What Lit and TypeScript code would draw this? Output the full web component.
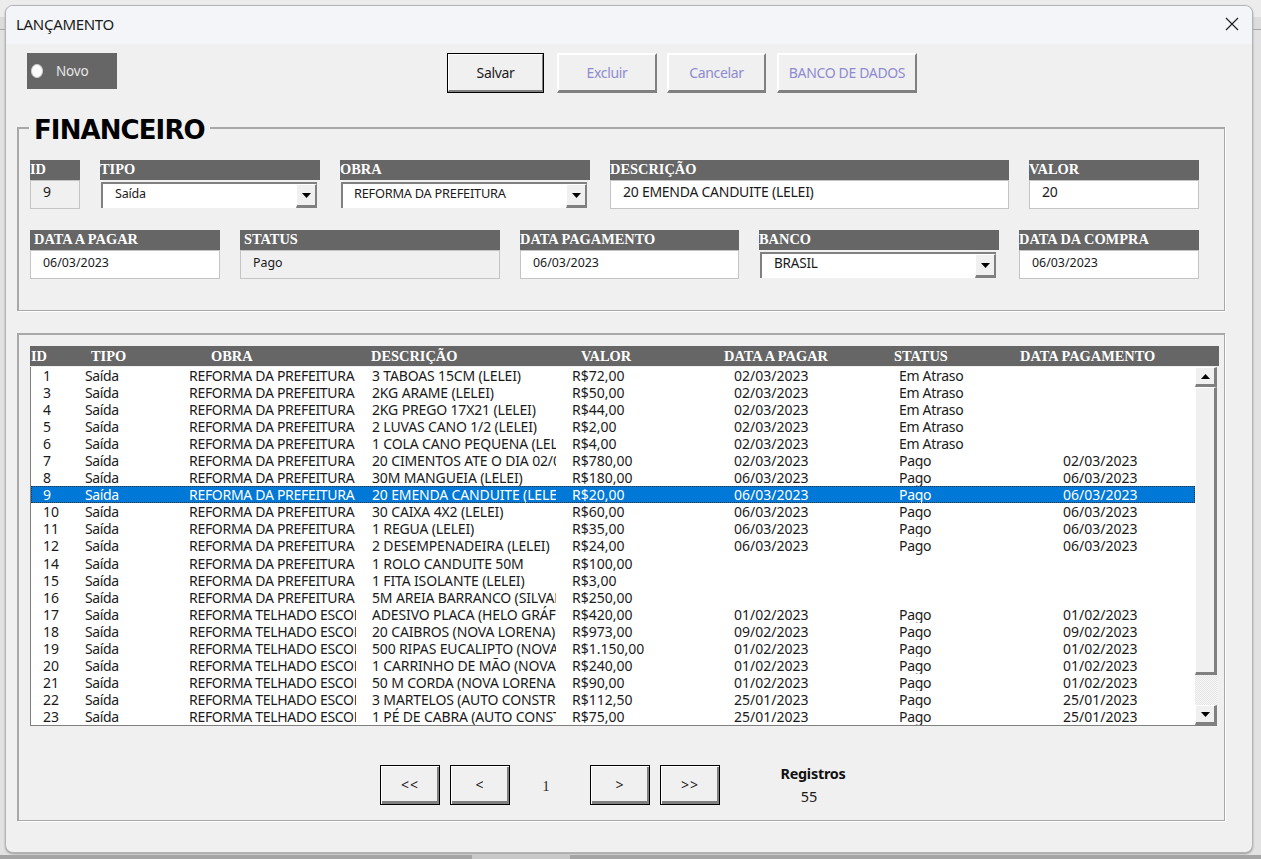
import { LitElement, html, css } from "lit";
import { customElement } from "lit/decorators.js";

const REF = "REFORMA DA PREFEITURA";
const TEL = "REFORMA TELHADO ESCOLA";
type Row = [string, string, string, string, string, string, string];
const rows: Row[] = [
  ["1", REF, "3 TABOAS 15CM (LELEI)", "R$72,00", "02/03/2023", "Em Atraso", ""],
  ["3", REF, "2KG ARAME (LELEI)", "R$50,00", "02/03/2023", "Em Atraso", ""],
  ["4", REF, "2KG PREGO 17X21 (LELEI)", "R$44,00", "02/03/2023", "Em Atraso", ""],
  ["5", REF, "2 LUVAS CANO 1/2 (LELEI)", "R$2,00", "02/03/2023", "Em Atraso", ""],
  ["6", REF, "1 COLA CANO PEQUENA (LELEI)", "R$4,00", "02/03/2023", "Em Atraso", ""],
  ["7", REF, "20 CIMENTOS ATE O DIA 02/03", "R$780,00", "02/03/2023", "Pago", "02/03/2023"],
  ["8", REF, "30M MANGUEIA (LELEI)", "R$180,00", "06/03/2023", "Pago", "06/03/2023"],
  ["9", REF, "20 EMENDA CANDUITE (LELEI)", "R$20,00", "06/03/2023", "Pago", "06/03/2023"],
  ["10", REF, "30 CAIXA 4X2 (LELEI)", "R$60,00", "06/03/2023", "Pago", "06/03/2023"],
  ["11", REF, "1 REGUA (LELEI)", "R$35,00", "06/03/2023", "Pago", "06/03/2023"],
  ["12", REF, "2 DESEMPENADEIRA (LELEI)", "R$24,00", "06/03/2023", "Pago", "06/03/2023"],
  ["14", REF, "1 ROLO CANDUITE 50M", "R$100,00", "", "", ""],
  ["15", REF, "1 FITA ISOLANTE (LELEI)", "R$3,00", "", "", ""],
  ["16", REF, "5M AREIA BARRANCO (SILVANO)", "R$250,00", "", "", ""],
  ["17", TEL, "ADESIVO PLACA (HELO GRÁFICA)", "R$420,00", "01/02/2023", "Pago", "01/02/2023"],
  ["18", TEL, "20 CAIBROS (NOVA LORENA)", "R$973,00", "09/02/2023", "Pago", "09/02/2023"],
  ["19", TEL, "500 RIPAS EUCALIPTO (NOVA LORENA)", "R$1.150,00", "01/02/2023", "Pago", "01/02/2023"],
  ["20", TEL, "1 CARRINHO DE MÃO (NOVA LORENA)", "R$240,00", "01/02/2023", "Pago", "01/02/2023"],
  ["21", TEL, "50 M CORDA (NOVA LORENA)", "R$90,00", "01/02/2023", "Pago", "01/02/2023"],
  ["22", TEL, "3 MARTELOS (AUTO CONSTRUÇÃO)", "R$112,50", "25/01/2023", "Pago", "25/01/2023"],
  ["23", TEL, "1 PÉ DE CABRA (AUTO CONSTRUÇÃO)", "R$75,00", "25/01/2023", "Pago", "25/01/2023"],
];

const arrowDown = html`<svg class="arr" width="9" height="5" viewBox="0 0 9 5"><path d="M0 0h9L4.5 5z" fill="#000"/></svg>`;
const arrowUp = html`<svg class="arr" width="9" height="5" viewBox="0 0 9 5"><path d="M0 5h9L4.5 0z" fill="#000"/></svg>`;

@customElement("app-root")
export class AppRoot extends LitElement {
  static styles = css`
    :host { display: block; width: 1261px; height: 859px; overflow: hidden; background: linear-gradient(180deg, #ececec 0 17px, #dcdcdc 17px 29px, #a8a8a8 29px 30px, #e2e2e2 30px); font-family: "Noto Sans", "Liberation Sans", sans-serif; font-size: 14px; color: #1a1a1a; }
    * { box-sizing: border-box; }
    .dialog { margin: 5px 8px 0 5px; width: 1248px; height: 848px; background: #f0f0f0; border: 1px solid #b4b4b4; border-radius: 8px; overflow: hidden; box-shadow: 0 1px 2px #999; }
    .title { height: 38px; background: #f3f5f9; display: flex; align-items: center; justify-content: space-between; padding: 0 13px 2px 10px; font-size: 15px; letter-spacing: -0.3px; }
    .title svg { display: block; }
    .body { padding: 9px 27px 0 11px; }
    .top { display: flex; height: 40px; margin-bottom: 34px; }
    .novo { margin-left: 10px; width: 90px; height: 36px; background: #666; display: flex; align-items: center; padding-left: 4px; gap: 13px; color: #e6e6e6; font-size: 13.5px; letter-spacing: -0.2px; }
    .radio { width: 12px; height: 14px; border-radius: 50%; background: #fff; border: 1px solid #d0d0d0; }
    .actions { display: flex; margin-left: 330px; gap: 11px; }
    .btn { height: 40px; background: #f0f0f0; display: flex; align-items: center; justify-content: center; border-top: 2px solid #fff; border-left: 2px solid #fff; border-right: 2px solid #808080; border-bottom: 3px solid #808080; font-size: 14px; letter-spacing: -0.34px; color: #1a1a1a; white-space: nowrap; }
    .btn.dis { color: #8d8bd0; }
    .btn.def { outline: 1px solid #000; outline-offset: -1px; }
    .btn.w97 { width: 97px; }
    .btn.w100 { width: 100px; margin-left: 2px; }
    .btn.w99 { width: 99px; margin-left: -1px; }
    .btn.w140 { width: 140px; }
    .group { border: 2px solid #a8a8a8; border-right-width: 1px; border-bottom-width: 1px; box-shadow: 1px 1px 0 #fff; width: 1208px; }
    .fin { height: 184px; padding: 11px 0 0 11px; display: flex; flex-direction: column; gap: 20px; }
    .legend-line { height: 0; position: relative; }
    .legend { position: absolute; left: -1px; top: -25px; background: #f0f0f0; padding: 0 5px; height: 30px; font: 700 26px/30px "DejaVu Sans", sans-serif; color: #000; letter-spacing: -0.9px; white-space: nowrap; }
    .fr { display: flex; gap: 20px; }
    .fr.second { margin-top: 1px; }
    .f { display: flex; flex-direction: column; }
    .lab { height: 20px; background: #666; color: #fff; font: 700 14.4px/19px "Liberation Serif", serif; white-space: nowrap; }
    .lab.pad { padding-left: 4px; }
    .val { height: 29px; background: #fff; border: 1px solid #c4c4c4; padding: 1px 0 0 12px; font-size: 14px; letter-spacing: -0.26px; white-space: nowrap; }
    .val.ro { background: #f0f0f0; }
    .val.s { font-size: 12.4px; letter-spacing: 0; padding-top: 3px; }
    .combo { height: 26px; margin: 2px 3px 0 1px; background: #fff; border-top: 2px solid #808080; border-left: 2px solid #808080; display: flex; justify-content: space-between; padding-left: 12px; font-size: 12.5px; letter-spacing: -0.2px; line-height: 19px; white-space: nowrap; }
    .combo .wide { font-size: 12.8px; letter-spacing: -0.25px; margin-left: -1px; }
    .combo .big { font-size: 13.5px; line-height: 19px; }
    .dd { width: 21px; height: 24px; background: #f0f0f0; border-top: 1px solid #fff; border-left: 1px solid #fff; border-right: 2px solid #808080; border-bottom: 3px solid #808080; display: flex; align-items: center; justify-content: center; flex: none; }
    .arr { display: block; }
    .list { margin-top: 22px; height: 488px; padding: 11px 0 0 11px; }
    .thead { width: 1189px; height: 20px; padding-left: 1px; background: #666; color: #fff; font: 700 14.4px/21px "Liberation Serif", serif; display: grid; grid-template-columns: 60px 120px 160px 210px 143px 170px 126px 199px; white-space: nowrap; }
    .tbody { width: 1187px; height: 359px; border: 1px solid #808080; border-top: 0; border-right: 0; display: flex; background: #fff; margin-top: 1px; }
    .rows { width: 1165px; overflow: hidden; }
    .row { height: 17.05px; line-height: 17px; display: grid; grid-template-columns: 54px 104px 167px 16px 184px 16px 162px 165px 164px 129px; white-space: nowrap; }
    .row span { overflow: hidden; }
    .row .id { padding-left: 12px; }
    .row .tp { letter-spacing: -0.4px; }
    .row .ob { letter-spacing: -0.3px; }
    .row .de { letter-spacing: -0.15px; }
    .row .st { letter-spacing: -0.3px; }
    .row.sel { background: #0078d7; color: #fff; outline: 1px dotted #333; outline-offset: -1px; }
    .sb { width: 22px; height: 358px; display: flex; flex-direction: column; background: repeating-conic-gradient(#f6f6f6 0 25%, #e6e6e6 0 50%) 0 0 / 2px 2px; }
    .sbtn { width: 22px; height: 20px; background: #f0f0f0; border-top: 1px solid #fff; border-left: 1px solid #fff; border-right: 3px solid #808080; border-bottom: 3px solid #808080; display: flex; align-items: center; justify-content: center; flex: none; }
    .thumb { height: 288px; width: 22px; background: #f0f0f0; border-top: 1px solid #fff; border-left: 1px solid #fff; border-right: 3px solid #808080; border-bottom: 3px solid #808080; flex: none; }
    .sp { flex: 1; }
    .pager { display: flex; margin: 39px 0 0 350px; align-items: flex-start; }
    .pbtn { width: 60px; height: 40px; border: 1px solid #000; background: #f0f0f0; box-shadow: inset 1px 1px 0 #fff, inset -2px -3px 0 #808080; display: flex; align-items: center; justify-content: center; font-size: 14px; letter-spacing: 1px; color: #222; padding-bottom: 1px; }
    .pbtn.next { margin-left: 10px; }
    .pnum { width: 80px; padding-right: 8px; text-align: center; font: 14px/44px "Liberation Serif", serif; color: #222; }
    .reg { margin-left: 60px; width: 66px; display: flex; flex-direction: column; align-items: center; }
    .reg b { font-size: 14.4px; letter-spacing: -0.25px; line-height: 18px; color: #111; white-space: nowrap; }
    .reg span { line-height: 18px; margin-top: 4px; margin-left: -8px; font-size: 14.5px; }
    .taskbar { height: 4px; margin-top: 2px; background: linear-gradient(90deg, #a4a4a4 0 472px, #c8c8c8 472px 570px, #a4a4a4 570px); }
  `;

  field(label: string, w: number, body: unknown, pad = false) {
    return html`<div class="f" style="width:${w}px"><div class="lab ${pad ? "pad" : ""}">${label}</div>${body}</div>`;
  }

  render() {
    return html`
      <div class="dialog">
        <div class="title"><span>LANÇAMENTO</span>
          <svg width="14" height="14" viewBox="0 0 14 14"><path d="M1 1l12 12M13 1L1 13" stroke="#222" stroke-width="1.2" fill="none"/></svg>
        </div>
        <div class="body">
          <div class="top">
            <div class="novo"><div class="radio"></div><span>Novo</span></div>
            <div class="actions">
              <div class="btn def w97">Salvar</div>
              <div class="btn dis w100">Excluir</div>
              <div class="btn dis w99">Cancelar</div>
              <div class="btn dis w140">BANCO DE DADOS</div>
            </div>
          </div>
          <div class="group fin">
            <div class="legend-line"><div class="legend">FINANCEIRO</div></div>
            <div class="fr">
              ${this.field("ID", 50, html`<div class="val ro">9</div>`)}
              ${this.field("TIPO", 220, html`<div class="combo"><span>Saída</span><div class="dd">${arrowDown}</div></div>`)}
              ${this.field("OBRA", 250, html`<div class="combo"><span class="wide">REFORMA DA PREFEITURA</span><div class="dd">${arrowDown}</div></div>`)}
              ${this.field("DESCRIÇÃO", 399, html`<div class="val">20 EMENDA CANDUITE (LELEI)</div>`)}
              ${this.field("VALOR", 170, html`<div class="val">20</div>`)}
            </div>
            <div class="fr second">
              ${this.field("DATA A PAGAR", 190, html`<div class="val s">06/03/2023</div>`, true)}
              ${this.field("STATUS", 260, html`<div class="val s ro">Pago</div>`, true)}
              ${this.field("DATA PAGAMENTO", 219, html`<div class="val s">06/03/2023</div>`)}
              ${this.field("BANCO", 240, html`<div class="combo"><span class="big">BRASIL</span><div class="dd">${arrowDown}</div></div>`)}
              ${this.field("DATA DA COMPRA", 180, html`<div class="val s">06/03/2023</div>`)}
            </div>
          </div>
          <div class="group list">
            <div class="thead">
              <span>ID</span><span>TIPO</span><span>OBRA</span><span>DESCRIÇÃO</span><span>VALOR</span><span>DATA A PAGAR</span><span>STATUS</span><span>DATA PAGAMENTO</span>
            </div>
            <div class="tbody">
              <div class="rows">
                ${rows.map((r) => html`<div class="row ${r[0] === "9" ? "sel" : ""}">
                  <span class="id">${r[0]}</span><span class="tp">Saída</span><span class="ob">${r[1]}</span><i></i><span class="de">${r[2]}</span><i></i><span>${r[3]}</span><span>${r[4]}</span><span class="st">${r[5]}</span><span>${r[6]}</span>
                </div>`)}
              </div>
              <div class="sb">
                <div class="sbtn">${arrowUp}</div>
                <div class="thumb"></div>
                <div class="sp"></div>
                <div class="sbtn">${arrowDown}</div>
              </div>
            </div>
            <div class="pager">
              <div class="pbtn">&lt;&lt;</div>
              <div class="pbtn next">&lt;</div>
              <div class="pnum">1</div>
              <div class="pbtn">&gt;</div>
              <div class="pbtn next">&gt;&gt;</div>
              <div class="reg"><b>Registros</b><span>55</span></div>
            </div>
          </div>
        </div>
      </div>
      <div class="taskbar"></div>
    `;
  }
}
